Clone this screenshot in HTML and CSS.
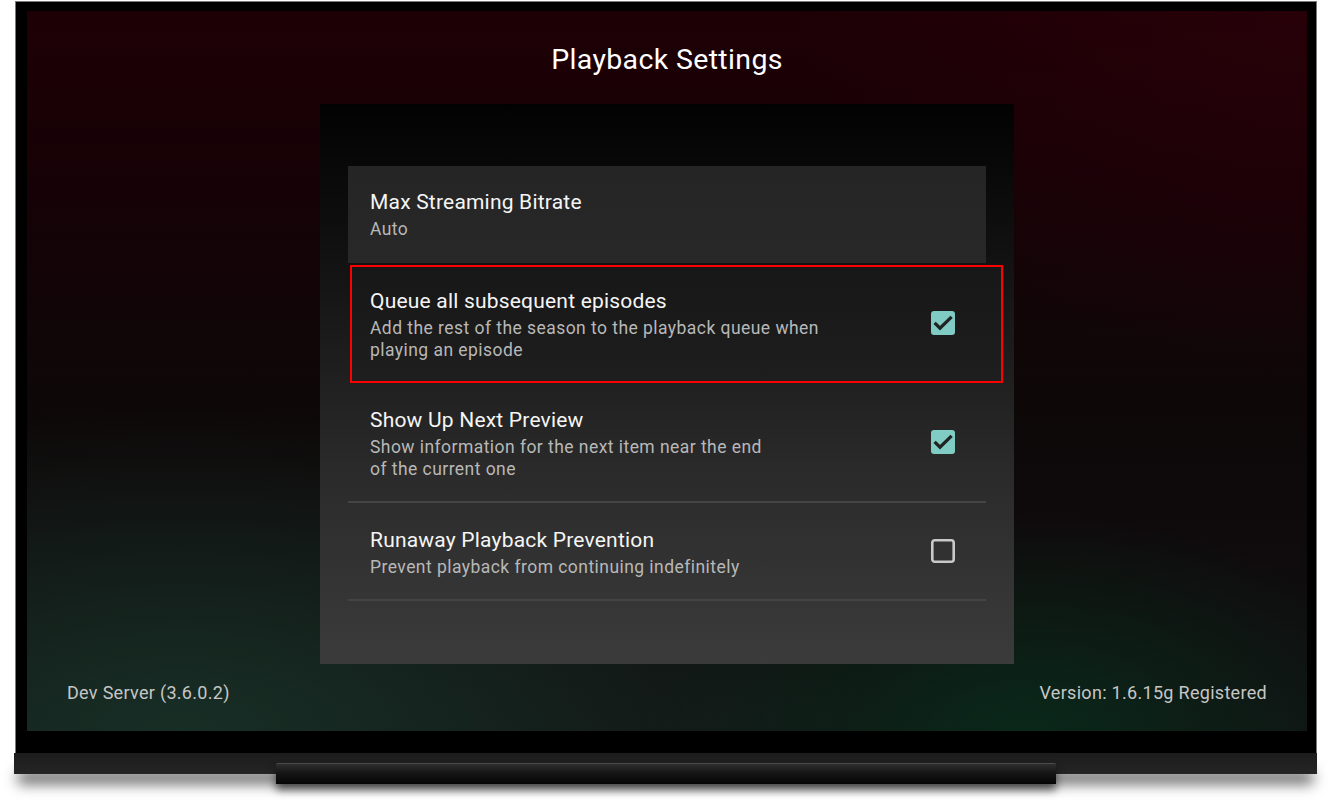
FILE: index.html
```html
<!DOCTYPE html>
<html lang="en">
<head>
<meta charset="utf-8">
<title>Playback Settings</title>
<link rel="stylesheet" href="styles.css">
</head>
<body>
<div class="page">
  <div class="tv">
    <div class="bezel">
      <div class="screen">
        <h1 class="title">Playback Settings</h1>
        <div class="panel">
          <div class="row row-card">
            <div class="text">
              <div class="row-title">Max Streaming Bitrate</div>
              <div class="row-desc">Auto</div>
            </div>
          </div>
          <div class="row row-focused">
            <div class="text">
              <div class="row-title">Queue all subsequent episodes</div>
              <div class="row-desc">Add the rest of the season to the playback queue when<br>playing an episode</div>
            </div>
            <svg class="box" viewBox="0 0 24 24" width="24" height="24"><rect x="0" y="0" width="24" height="24" rx="3" fill="#80cbc4"/><polyline points="3.6,11.8 9,17.2 20.6,5.8" fill="none" stroke="#1f2322" stroke-width="3.2"/></svg>
          </div>
          <div class="row row-sep row-tall">
            <div class="text">
              <div class="row-title">Show Up Next Preview</div>
              <div class="row-desc">Show information for the next item near the end<br>of the current one</div>
            </div>
            <svg class="box" viewBox="0 0 24 24" width="24" height="24"><rect x="0" y="0" width="24" height="24" rx="3" fill="#80cbc4"/><polyline points="3.6,11.8 9,17.2 20.6,5.8" fill="none" stroke="#1f2322" stroke-width="3.2"/></svg>
          </div>
          <div class="row row-sep">
            <div class="text">
              <div class="row-title">Runaway Playback Prevention</div>
              <div class="row-desc">Prevent playback from continuing indefinitely</div>
            </div>
            <svg class="box" viewBox="0 0 24 24" width="24" height="24"><rect x="1.3" y="1.3" width="21.4" height="21.4" rx="2.5" fill="none" stroke="#c9c9c9" stroke-width="2.6"/></svg>
          </div>
        </div>
        <div class="footer">
          <span>Dev Server (3.6.0.2)</span>
          <span>Version: 1.6.15g Registered</span>
        </div>
      </div>
    </div>
    <div class="base"></div>
    <div class="stand"></div>
  </div>
</div>
</body>
</html>
```

FILE: styles.css
```css
html, body {
  margin: 0;
  padding: 0;
  background: #ffffff;
  overflow: hidden;
}

body {
  width: 1338px;
  height: 809px;
  font-family: Roboto, "Noto Sans", "Liberation Sans", sans-serif;
}

.page {
  padding: 1px 0 0 14px;
}

.tv {
  position: relative;
  width: 1304px;
}

.bezel {
  margin-left: 1px;
  width: 1302px;
  box-sizing: border-box;
  background: #000;
  border: 1px solid #7a7a7a;
  border-bottom: none;
  padding: 9px 9px 22px 11px;
}

.screen {
  width: 1280px;
  height: 720px;
  display: flex;
  flex-direction: column;
  background:
    radial-gradient(ellipse 55% 45% at 12% 100%, rgba(24, 50, 40, 0.9), rgba(24, 50, 40, 0) 100%),
    radial-gradient(ellipse 30% 30% at 78% 100%, rgba(8, 46, 28, 0.8), rgba(8, 46, 28, 0) 100%),
    radial-gradient(ellipse 40% 50% at 100% 0%, rgba(46, 0, 10, 0.6), rgba(46, 0, 10, 0) 100%),
    linear-gradient(180deg, #1d0005 0%, #160206 25%, #0d0708 55%, #111112 100%);
}

.title {
  margin: 0;
  padding-top: 33px;
  font-size: 28.5px;
  letter-spacing: 0.35px;
  line-height: 32px;
  font-weight: 400;
  color: #ffffff;
  text-align: center;
}

.panel {
  width: 694px;
  height: 560px;
  box-sizing: border-box;
  margin: 28px auto 0;
  padding: 62px 28px 0;
  background: linear-gradient(180deg, #020202 0%, #101010 25%, #2a2a2a 65%, #3b3b3b 100%);
}

.row {
  display: flex;
  align-items: center;
  justify-content: space-between;
  padding: 21px 31px 21px 22px;
}

.row-card {
  background: linear-gradient(180deg, #252525, #282828);
  padding: 20px 31px 23px 22px;
  margin-bottom: 2px;
}

.row-focused {
  margin: 0 -17px 0 2px;
  border: 2px solid #ff0000;
  background: linear-gradient(180deg, #171717, #1e1e1e);
  padding: 18px 46px 20px 18px;
}

.row-sep {
  border-bottom: 2px solid #444444;
}

.row-title {
  font-size: 21px;
  letter-spacing: 0.2px;
  line-height: 32px;
  color: #f5f5f5;
  white-space: nowrap;
}

.row-desc {
  font-size: 17.5px;
  letter-spacing: 0.45px;
  line-height: 22px;
  color: #b8b8b8;
  white-space: nowrap;
}

.box {
  display: block;
  flex: none;
}

.footer {
  display: flex;
  justify-content: space-between;
  margin-top: 17px;
  padding: 0 40px;
  font-size: 18px;
  letter-spacing: 0.3px;
  line-height: 24px;
  color: #c6c6c6;
}

.base {
  width: 1303px;
  height: 21px;
  background: linear-gradient(180deg, #1c1c1c, #252525);
  box-shadow: 0 14px 14px -4px rgba(0, 0, 0, 0.6);
}

.stand {
  position: absolute;
  left: 262px;
  top: 762px;
  width: 780px;
  height: 21px;
  box-sizing: border-box;
  border-top: 1px solid #4a4a4a;
  border-radius: 2px 2px 0 0;
  background: linear-gradient(180deg, #2e2e2e 0%, #161616 45%, #050505 100%);
  box-shadow: 0 6px 8px rgba(0, 0, 0, 0.6);
}
```
